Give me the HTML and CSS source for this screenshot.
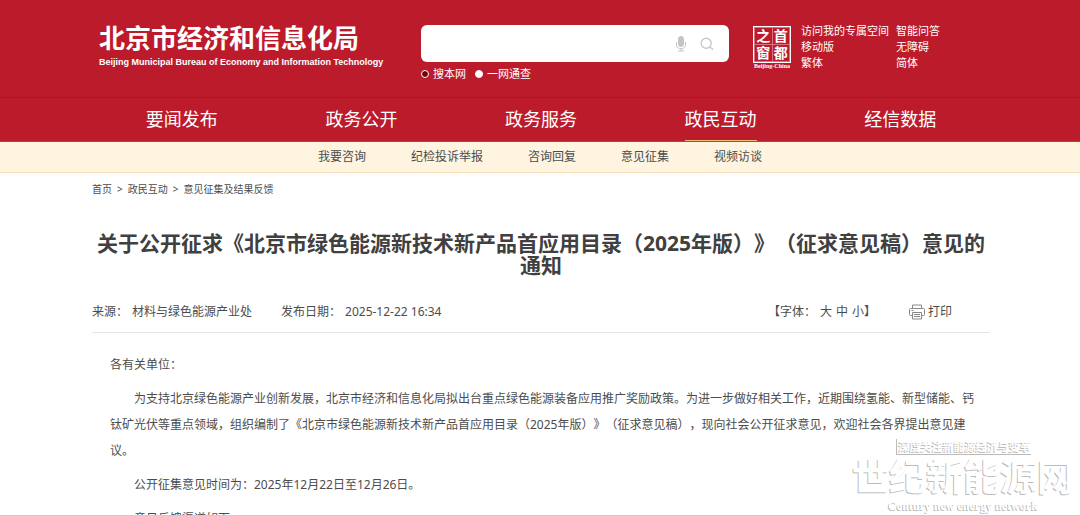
FILE: index.html
```html
<!DOCTYPE html>
<html lang="zh-CN">
<head>
<meta charset="utf-8">
<meta name="viewport" content="width=device-width, initial-scale=1">
<title>北京市经济和信息化局</title>
<link rel="stylesheet" href="styles.css">
</head>
<body>
<header class="header">
  <div class="wrap header-row">
    <div class="logo">
      <div class="logo-cn">北京市经济和信息化局</div>
      <div class="logo-en">Beijing Municipal Bureau of Economy and Information Technology</div>
    </div>
    <form class="search">
      <div class="search-box">
        <input class="search-input" type="text" aria-label="搜索">
        <button class="icon-btn" type="button" aria-label="语音">
          <svg width="12" height="16" viewBox="0 0 12 16" fill="none" stroke="#c4c4c4"><rect x="3.5" y="0.5" width="5" height="10" rx="2.5" fill="#c4c4c4"/><path d="M1.500 6v3a4.500 3.800 0 0 0 9 0V6M6 12.500V15M3 15h6"/></svg>
        </button>
        <button class="icon-btn" type="submit" aria-label="搜索">
          <svg width="14" height="14" viewBox="0 0 14 14" fill="none" stroke="#c8c8c8" stroke-width="1.4"><circle cx="6.2" cy="6.2" r="5"/><path d="M10 10l3 2.6"/></svg>
        </button>
      </div>
      <div class="scopes">
        <label class="scope"><input type="radio" name="scope" checked>搜本网</label>
        <label class="scope"><input type="radio" name="scope">一网通查</label>
      </div>
    </form>
    <a class="seal" href="#">
      <span class="seal-grid"><span>之</span><span>首</span><span>窗</span><span>都</span></span>
      <span class="seal-name">Beijing-China</span>
    </a>
    <nav class="tools">
      <a href="#">访问我的专属空间</a><a href="#">智能问答</a>
      <a href="#">移动版</a><a href="#">无障碍</a>
      <a href="#">繁体</a><a href="#">简体</a>
    </nav>
  </div>
  <nav class="mainnav">
    <div class="wrap mainnav-row">
      <a href="#">要闻发布</a>
      <a href="#">政务公开</a>
      <a href="#">政务服务</a>
      <a class="active" href="#">政民互动</a>
      <a href="#">经信数据</a>
    </div>
  </nav>
</header>
<nav class="subnav">
  <a href="#">我要咨询</a>
  <a href="#">纪检投诉举报</a>
  <a href="#">咨询回复</a>
  <a href="#">意见征集</a>
  <a href="#">视频访谈</a>
</nav>
<main class="main">
  <div class="wrap">
    <nav class="crumbs"><a href="#">首页</a><span>&gt;</span><a href="#">政民互动</a><span>&gt;</span><a href="#">意见征集及结果反馈</a></nav>
    <h1 class="title">关于公开征求《北京市绿色能源新技术新产品首应用目录（2025年版）》（征求意见稿）意见的通知</h1>
    <div class="meta">
      <div class="pair"><span>来源：</span><span>材料与绿色能源产业处</span></div>
      <div class="pair"><span>发布日期：</span><time>2025-12-22 16:34</time></div>
      <div class="fontsize"><span>【字体：</span><button type="button">大</button><button type="button">中</button><span><button type="button">小</button>】</span></div>
      <button class="print" type="button">
        <svg width="16" height="16" viewBox="0 0 16 16" fill="none" stroke="#888"><path d="M3.500 4.500v-3.500h9v3.500M3.500 11.500h-2a1 1 0 0 1-1-1v-5a1 1 0 0 1 1-1h13a1 1 0 0 1 1 1v5a1 1 0 0 1-1 1h-2M3.500 8.500h9v6.500h-9zM5 10.500h6M5 12.500h6M2.500 6.500h2"/></svg>打印
      </button>
    </div>
    <article class="article">
      <p class="salute">各有关单位：</p>
      <p>为支持北京绿色能源产业创新发展，北京市经济和信息化局拟出台重点绿色能源装备应用推广奖励政策。为进一步做好相关工作，近期围绕氢能、新型储能、钙钛矿光伏等重点领域，组织编制了《北京市绿色能源新技术新产品首应用目录（2025年版）》（征求意见稿），现向社会公开征求意见，欢迎社会各界提出意见建议。</p>
      <p>公开征集意见时间为：2025年12月22日至12月26日。</p>
      <p>意见反馈渠道如下：</p>
    </article>
  </div>
  <div class="watermark">
    <div class="wm-top">深度关注新能源经济与变革</div>
    <div class="wm-name">世纪新能源网</div>
    <div class="wm-en">Century new energy network</div>
  </div>
</main>
</body>
</html>
```
FILE: styles.css
```css
* { box-sizing: border-box; }
body {
  margin: 0;
  height: 100vh;
  display: flex;
  flex-direction: column;
  overflow: hidden;
  background: #fff;
  color: #4c4c4c;
  font: 12px/16px "Noto Sans", "Noto Sans CJK SC", sans-serif;
  text-spacing-trim: space-all;
}
a { color: inherit; text-decoration: none; }
button { padding: 0; border: 0; background: none; color: inherit; font: inherit; cursor: pointer; }
svg { display: block; }
.wrap { max-width: 900px; margin: 0 auto; padding-left: 2px; }

.header { background: #bc1b2c; color: #fff; }
.header-row { display: flex; align-items: flex-start; height: 97px; padding-left: 9px; }
.logo { width: 322px; padding-top: 22px; white-space: nowrap; }
.logo-cn { font-size: 26px; line-height: 32px; font-weight: 700; }
.logo-en { font: 700 9px/16px "Liberation Sans", sans-serif; }
.search { flex: 1; margin-top: 25px; }
.search-box {
  display: flex;
  align-items: center;
  gap: 13px;
  height: 37px;
  padding: 0 15px 0 10px;
  border-radius: 6px;
  background: #fff;
}
.search-input { flex: 1; min-width: 0; border: 0; outline: 0; background: none; font: inherit; }
.scopes { display: flex; gap: 9px; padding-top: 4px; font-size: 11px; }
.scope { display: flex; align-items: center; gap: 4px; }
.scope input {
  appearance: none;
  width: 8px;
  height: 8px;
  margin: 0;
  border: 1px solid #fff;
  border-radius: 50%;
  background: #fff;
}
.scope input:checked { background: #6d0508; }
.seal { display: block; width: 42px; margin: 26px 8px 0 22px; }
.seal-grid {
  display: grid;
  grid-template-columns: 1fr 1fr;
  gap: 1px;
  width: 38px;
  margin: 0 auto;
  padding: 1px;
  border: 1px solid #fff;
  outline: 1px solid #d8747e;
  outline-offset: -2px;
  font-size: 14px;
  font-weight: 700;
  line-height: 16px;
  text-align: center;
}
.seal-grid span { box-shadow: 0 0 0 1px #d8747e; }
.seal-name { display: block; font: 700 6px/6px "Liberation Serif", serif; text-align: center; white-space: nowrap; }
.tools {
  display: grid;
  grid-template-columns: 95px 94px;
  padding-top: 23px;
  font-size: 11px;
}
.mainnav { border-top: 1px solid #a31825; border-bottom: 1px solid #cc3543; }
.mainnav-row { display: grid; grid-template-columns: repeat(5, 1fr); justify-items: center; }
.mainnav a { height: 43px; font-size: 18px; line-height: 43px; }
.mainnav .active { border-bottom: 1px solid #f0bd7e; }
.subnav {
  display: flex;
  justify-content: center;
  gap: 45px;
  background: #fef4df;
  border-bottom: 1px solid #fbe1bb;
  line-height: 30px;
}

.main { position: relative; flex: 1; min-height: 0; overflow: hidden; border-bottom: 1px solid #ccc; }
.crumbs { display: flex; gap: 5px; padding-top: 8px; font-size: 10px; }
.title {
  margin: 35px 0 28px;
  color: #404040;
  font-size: 21px;
  line-height: 22px;
  text-align: center;
}
.meta {
  display: flex;
  align-items: center;
  padding: 0 38px 12px 0;
  border-bottom: 1px solid #e4e4e4;
}
.pair { display: flex; gap: 4px; margin-right: 29px; }
.fontsize { display: flex; gap: 4px; margin-left: auto; }
.print { display: flex; align-items: center; gap: 3px; margin-left: 33px; }
.article { padding: 19px 16px 0 18px; line-height: 26px; }
.article p { margin: 0 0 8px; text-indent: 24px; }
.article .salute { text-indent: 0; }

.watermark {
  position: absolute;
  right: 6px;
  bottom: 2px;
  display: flex;
  flex-direction: column;
  align-items: center;
  color: #fff;
  font-weight: 700;
  text-shadow: -1px 1px 0 #bbb;
  white-space: nowrap;
}
.wm-top { border-left: 1px solid #bbb; border-bottom: 1px solid #bbb; padding-left: 2px; font-size: 11px; line-height: 15px; }
.wm-name { font-size: 37px; line-height: 44px; }
.wm-en { font: 700 12px/14px "Liberation Serif", serif; }
```
